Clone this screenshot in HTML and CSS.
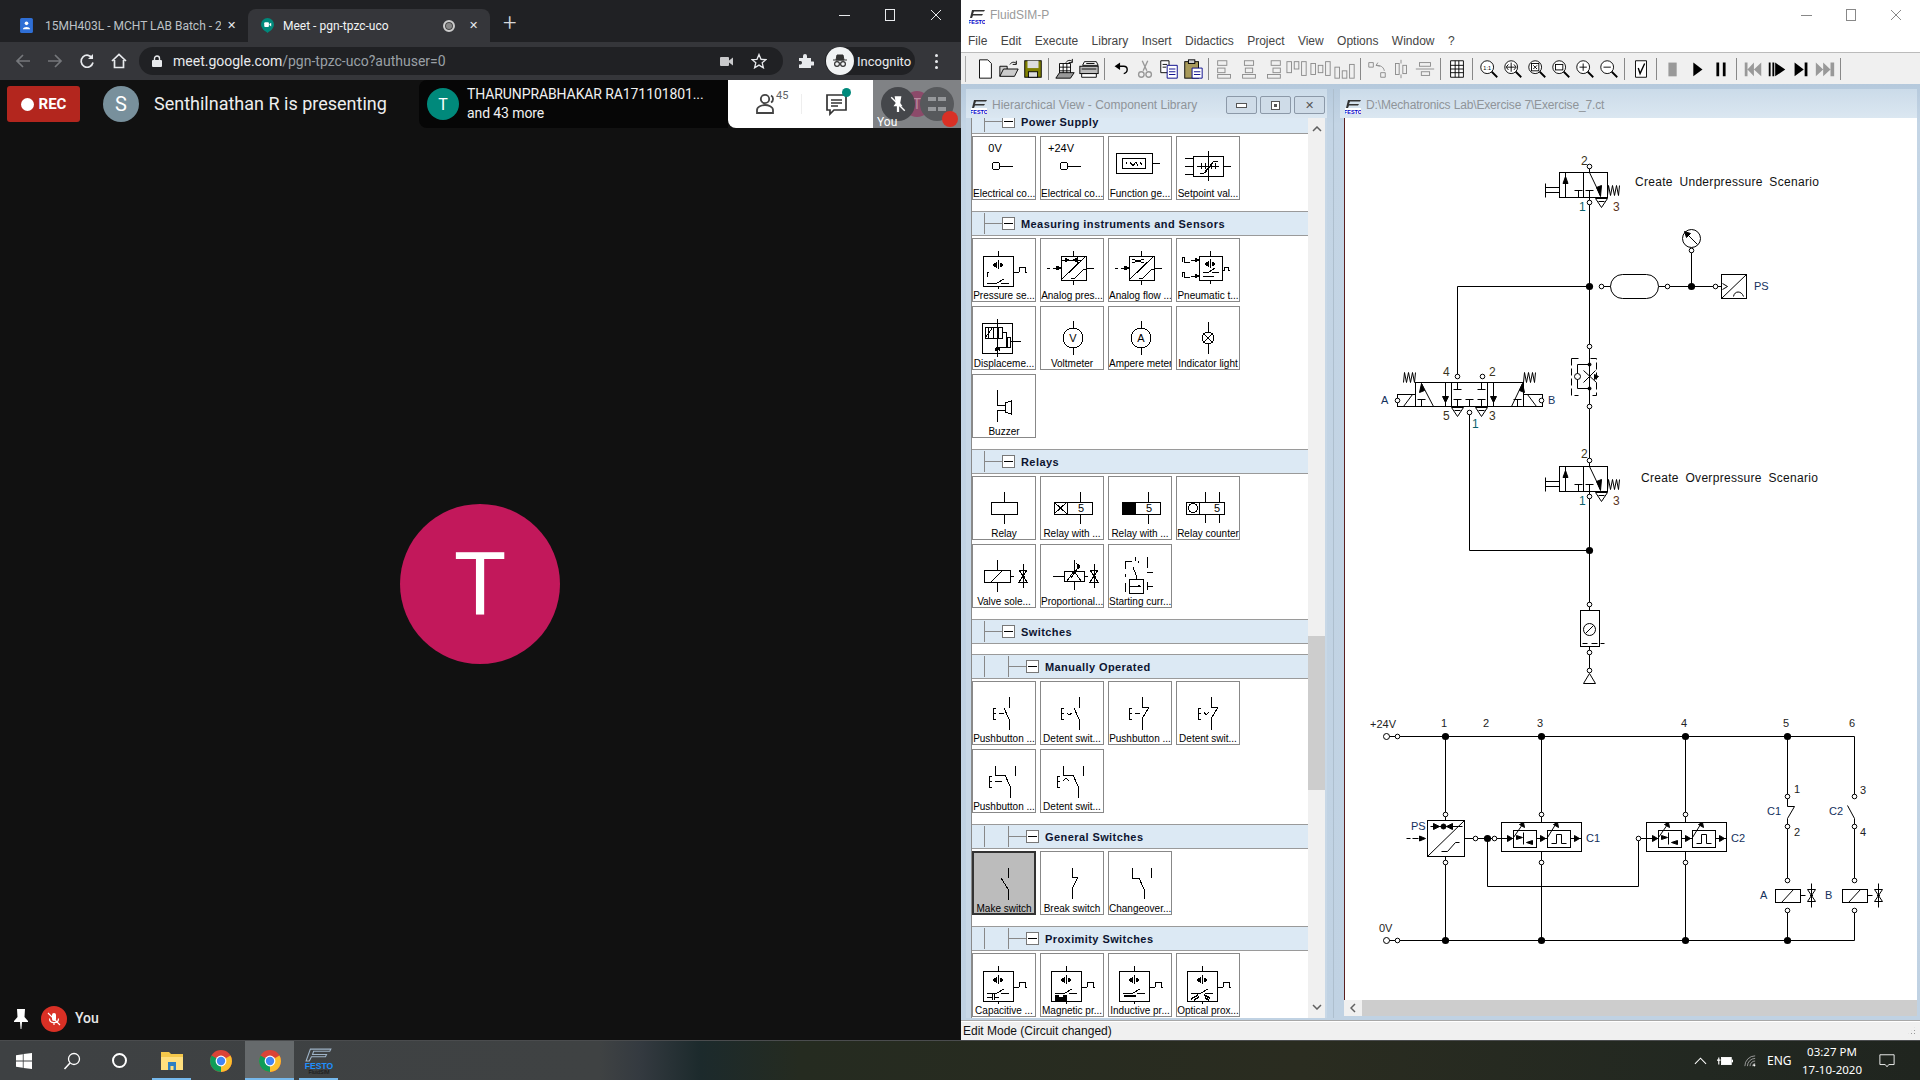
FILE: index.html
```html
<!DOCTYPE html>
<html lang="en">
<head>
    <meta charset="UTF-8">
    <title>Meet - pgn-tpzc-uco</title>
    <link rel="stylesheet" href="styles.css">
</head>
<body>

<!-- shared drawings -->
<svg class="defs">
    <defs>
        <g id="festo">
            <path d="M3 3H16L15 4.500H5L4 7H14L13 8.500H4L3 11H1Z" fill="#333"/>
            <rect x="0" y="11" width="16" height="6" fill="#fff"/>
            <text x="8" y="16.500" class="festo-text">FESTO</text>
        </g>
        <g id="chrome-logo">
            <circle cx="12" cy="12" r="11" fill="#db4437"/>
            <path d="M12 12L2.5 6.5A11 11 0 0 0 12 23Z" fill="#0f9d58"/>
            <path d="M12 12L21.5 6.5A11 11 0 0 1 12 23Z" fill="#fbc02d"/>
            <circle cx="12" cy="12" r="5.4" fill="#fff"/>
            <circle cx="12" cy="12" r="4.2" fill="#4285f4"/>
        </g>
        <!-- toolbar -->
        <g id="t-lens">
            <circle cx="10" cy="10" r="7" fill="#fff" stroke="#000"/>
            <path d="M15 15L21 21" stroke="#000" stroke-width="2"/>
        </g>
        <g id="t-al1" stroke="#8a8a8a" fill="none"><rect x="4" y="3" width="10" height="5"/><rect x="4" y="11" width="8" height="5"/><rect x="4" y="18" width="14" height="4"/></g>
        <g id="t-al2" stroke="#8a8a8a" fill="none"><rect x="7" y="3" width="10" height="5"/><rect x="8" y="11" width="8" height="5"/><rect x="5" y="18" width="14" height="4"/></g>
        <g id="t-al3" stroke="#8a8a8a" fill="none"><rect x="10" y="3" width="10" height="5"/><rect x="12" y="11" width="8" height="5"/><rect x="6" y="18" width="14" height="4"/></g>
        <g id="t-al4" stroke="#8a8a8a" fill="none"><rect x="1" y="4" width="5" height="12"/><rect x="9" y="4" width="5" height="8"/><rect x="17" y="4" width="5" height="15"/></g>
        <g id="t-al5" stroke="#8a8a8a" fill="none"><rect x="1" y="6" width="5" height="12"/><rect x="9" y="8" width="5" height="8"/><rect x="17" y="4" width="5" height="15"/></g>
        <g id="t-al6" stroke="#8a8a8a" fill="none"><rect x="1" y="10" width="5" height="12"/><rect x="9" y="14" width="5" height="8"/><rect x="17" y="7" width="5" height="15"/></g>
        <!-- components -->
        <g id="port"><circle r="2.3" fill="#fff" stroke="#000"/></g>
        <g id="junction"><circle r="3.6" fill="#000" stroke="none"/></g>
        <g id="hourglass"><path d="M0 -12V12M-4 -6H4L-4 6H4Z"/><path d="M-1.5 0H1.5"/></g>
        <g id="spring"><path d="M0 0L1 -10L3 0L5 -10L7 0L9 -10L11 0L12 -10"/></g>
        <g id="exhaust"><path d="M-6 0H6L0 9Z" fill="#fff"/><path d="M-3 3H3"/></g>
        <g id="v32">
            <rect width="48" height="25" fill="#fff"/>
            <path d="M24 0V25M6 25V0M19 25V18M15 18H23M30 25V18M26 18H34M30 0L41 23"/>
            <path d="M6 4L3.5 11H8.5Z M41 24L37 15L42 13Z" fill="#000"/>
            <path d="M-14 11V25M-14 15H0M-14 20H0"/>
            <use href="#spring" x="48" y="23"/>
            <use href="#exhaust" x="42" y="26"/>
        </g>
        <g id="cmp">
            <rect width="80" height="29" fill="#fff"/>
            <rect x="12" y="8" width="23" height="17"/>
            <rect x="46" y="8" width="23" height="17"/>
            <path d="M0 16H12M35 16H46M69 16H80"/>
            <path d="M6 13L11 16L6 19Z M39 13L44 16L39 19Z M73 13L78 16L73 19Z M15 13L21 15L15 17Z M31 18L25 20L31 22Z" fill="#000"/>
            <path d="M12 15L21 2M46 15L54 2"/>
            <path d="M18 2L22 0L23 5Z M52 2L56 0L57 5Z" fill="#000"/>
            <path d="M22 10V22M50 21H55V12H60V21H65"/>
        </g>
        <g id="coil">
            <rect width="25" height="13" fill="#fff"/>
            <path d="M6 13L18 0M25 6H30"/>
            <use href="#hourglass" x="36" y="6"/>
        </g>
        <!-- library tiles -->
        <g id="sensor-body">
            <rect x="10" y="17" width="30" height="30"/>
            <path d="M25 12V17M25 47V51M40 33H46M46 33V28H52V33H54"/>
            <path d="M25 21V30M23 24L20 26L23 28ZM27 24L30 26L27 28Z" fill="#000"/>
        </g>
        <g id="contact"><path d="M14 39H24L31 35M28 39H36"/></g>
        <g id="sw-no"><path d="M35 16V26M28 26L35 37V48"/></g>
        <g id="sw-e"><path d="M3 26H0V37H3M0 31.5H3"/></g>
    </defs>
</svg>

<div class="screen">
    <div class="windows">

        <!-- browser window -->
        <div class="chrome">
            <div class="tabstrip">
                <div class="tab">
                    <svg class="tab-icon" viewBox="0 0 12 14"><rect width="12" height="14" rx="1.5" fill="#2f6fd6"/><circle cx="6" cy="5" r="1.7" fill="#fff"/><path d="M2.6 10.5C3 7.8 9 7.8 9.4 10.5Z" fill="#fff"/></svg>
                    <span class="tab-title">15MH403L - MCHT LAB Batch - 2</span>
                    <span class="tab-x">&#10005;</span>
                </div>
                <div class="tab tab-active">
                    <svg class="tab-icon" viewBox="0 0 14 16"><path d="M7 0A7 7 0 0 1 14 7C14 11 10 14 7 16C4 14 0 11 0 7A7 7 0 0 1 7 0Z" fill="#00897b"/><rect x="3.5" y="4.5" width="5" height="5" rx="1" fill="#fff"/><path d="M9 6.5L11 5V9L9 7.5Z" fill="#fff"/></svg>
                    <span class="tab-title">Meet - pgn-tpzc-uco</span>
                    <span class="tab-rec"></span>
                    <span class="tab-x">&#10005;</span>
                </div>
                <span class="tab-new">+</span>
                <div class="win-btns">
                    <span class="min-ico"></span>
                    <span class="max-ico"></span>
                    <svg viewBox="0 0 12 12" class="x-ico"><path d="M1 1L11 11M11 1L1 11"/></svg>
                </div>
            </div>
            <div class="navbar">
                <svg class="nav-ico" viewBox="0 0 16 16"><path d="M15 8H2M8 2L2 8L8 14" class="grey"/></svg>
                <svg class="nav-ico" viewBox="0 0 16 16"><path d="M1 8H14M8 2L14 8L8 14" class="grey"/></svg>
                <svg class="nav-ico" viewBox="0 0 16 16"><path d="M13.5 5.5A6 6 0 1 0 14 9.5"/><path d="M14 1V6H9" class="solid"/></svg>
                <svg class="nav-ico" viewBox="0 0 16 16"><path d="M1 8L8 1.5L15 8M3.5 7V14.5H12.5V7"/></svg>
                <div class="omnibox">
                    <svg class="lock" viewBox="0 0 10 12"><rect y="5" width="10" height="7" rx="1" fill="#e8eaed"/><path d="M2.5 5V3.5A2.5 2.5 0 0 1 7.5 3.5V5" fill="none" stroke="#e8eaed" stroke-width="1.4"/></svg>
                    <span class="url"><b>meet.google.com</b>/pgn-tpzc-uco?authuser=0</span>
                    <svg class="omni-ico" viewBox="0 0 16 16"><rect x="1" y="4" width="9" height="9" rx="1" fill="#c8c9cb"/><path d="M10 7.5L14 4.5V12.5L10 9.5Z" fill="#c8c9cb"/></svg>
                    <svg class="omni-ico" viewBox="0 0 16 16"><path d="M8 1.5L10 6.3L15 6.6L11.2 9.8L12.4 14.8L8 12.1L3.6 14.8L4.8 9.8L1 6.6L6 6.3Z" fill="none" stroke="#e8eaed" stroke-width="1.3"/></svg>
                </div>
                <svg class="puzzle" viewBox="0 0 16 16"><path d="M1 5H5V3A2 2 0 0 1 9 3V5H13V8.5H15A2 2 0 0 1 15 12.5H13V15H1V11.5H3A2 2 0 0 0 3 8H1Z" fill="#e8eaed"/></svg>
                <div class="incog">
                    <span class="incog-ava"><svg viewBox="0 0 18 18"><path d="M2 8H16M5 8L6 3H12L13 8Z" fill="#333" stroke="#333"/><circle cx="6" cy="12" r="2.4" fill="none" stroke="#333" stroke-width="1.2"/><circle cx="12" cy="12" r="2.4" fill="none" stroke="#333" stroke-width="1.2"/></svg></span>
                    <span>Incognito</span>
                </div>
                <span class="kebab"><i></i><i></i><i></i></span>
            </div>
            <div class="meet">
                <div class="meet-top">
                    <div class="rec"><i></i>REC</div>
                    <div class="ava ava-s">S</div>
                    <div class="presenting">Senthilnathan R is presenting</div>
                    <div class="presenter-box">
                        <div class="ava ava-t">T</div>
                        <div class="who">THARUNPRABHAKAR RA171101801...<br>and 43 more</div>
                    </div>
                    <div class="meet-actions">
                        <div class="people">
                            <svg viewBox="0 0 24 24"><circle cx="10" cy="7" r="4.2"/><path d="M2 21V18C2 14.5 7 13 10 13S18 14.5 18 18V21Z"/><path d="M16 3.5A4 4 0 0 1 16 10.5"/></svg>
                            <sup>45</sup>
                        </div>
                        <span class="divider"></span>
                        <div class="chat">
                            <svg viewBox="0 0 24 24"><path d="M2 3H21V18H9L5 22V18H2Z"/><path d="M6 8H17M6 11H17M6 14H13"/></svg>
                            <i></i>
                        </div>
                    </div>
                    <div class="thumb">
                        <span class="thumb-c c2">T</span>
                        <span class="thumb-c c1"><svg viewBox="0 0 16 16"><path d="M5 1H11L10 7L12 10H9V15H7V10H4L6 7Z" fill="#fff"/><path d="M2 2L14 14" stroke="#fff" stroke-width="1.3"/></svg></span>
                        <span class="thumb-c c3"><i></i><i></i><i></i><i></i></span>
                        <span class="thumb-you">You</span>
                        <span class="thumb-mic"></span>
                    </div>
                </div>
                <div class="meet-stage">
                    <div class="big-t">T</div>
                </div>
                <div class="meet-bottom">
                    <svg class="pin" viewBox="0 0 14 20"><path d="M3 0H11L10.5 8L14 12V13H8L7.4 20H6.6L6 13H0V12L3.5 8Z" fill="#fff"/></svg>
                    <span class="mic"><svg viewBox="0 0 16 16"><rect x="6" y="2" width="4" height="8" rx="2" fill="#fff"/><path d="M3.5 7.5C3.5 13 12.5 13 12.5 7.5M8 12V14M2 2L14 14" fill="none" stroke="#fff" stroke-width="1.2"/></svg></span>
                    <span class="you">You</span>
                </div>
            </div>
        </div>

        <!-- FluidSIM window -->
        <div class="fluid">
            <div class="fs-title">
                <svg class="fs-logo" viewBox="0 0 16 17"><use href="#festo"/></svg>
                <span>FluidSIM-P</span>
                <div class="fs-btns">
                    <span class="min-ico"></span>
                    <span class="max-ico"></span>
                    <svg viewBox="0 0 12 12" class="x-ico"><path d="M1 1L11 11M11 1L1 11"/></svg>
                </div>
            </div>
            <div class="fs-menu">
                <span>File</span><span>Edit</span><span>Execute</span><span>Library</span><span>Insert</span><span>Didactics</span><span>Project</span><span>View</span><span>Options</span><span>Window</span><span>?</span>
            </div>
            <div class="fs-tools">
                <svg class="ti" viewBox="0 0 24 24"><path d="M6 2H15L19 6V22H6Z" fill="#fff" stroke="#000"/></svg>
                <svg class="ti" viewBox="0 0 24 24"><path d="M2 20L6 12H22L18 20ZM2 20V9H10V12" fill="#ccc" stroke="#000"/><path d="M13 7C15 4 18 4 20 6M20 3V7H16" fill="none" stroke="#000"/></svg>
                <svg class="ti" viewBox="0 0 24 24"><rect x="3" y="3" width="18" height="18" fill="#808000" stroke="#000"/><rect x="6" y="3" width="12" height="8" fill="#ddd"/><rect x="7" y="15" width="10" height="6" fill="#ddd" stroke="#000"/></svg>
                <i class="tsep"></i>
                <svg class="ti" viewBox="0 0 24 24"><path d="M6 6H18V18H6ZM6 10H18M6 14H18M10 6V18M14 6V18" fill="#fff" stroke="#000"/><path d="M2 22L6 16H22L18 22Z" fill="#999" stroke="#000"/><path d="M13 5C15 2 18 2 20 4M20 1V5H16" fill="none" stroke="#000"/></svg>
                <svg class="ti" viewBox="0 0 24 24"><path d="M7 4H20L22 8H5Z" fill="#fff" stroke="#000"/><rect x="2" y="9" width="20" height="8" fill="#bbb" stroke="#000"/><path d="M4 17H20V21H4Z" fill="#fff" stroke="#000"/><path d="M9 6H18M4 12H20" stroke="#000"/></svg>
                <i class="tsep"></i>
                <svg class="ti" viewBox="0 0 24 24"><path d="M10 9H15C20 9 20 16 15 17" fill="none" stroke="#000" stroke-width="1.5"/><path d="M5 9L11 5V13Z" fill="#000"/></svg>
                <svg class="ti" viewBox="0 0 24 24"><path d="M9 3L14 14M15 3L10 14" fill="none" stroke="#999" stroke-width="1.5"/><circle cx="8" cy="18" r="3" fill="none" stroke="#999" stroke-width="1.5"/><circle cx="16" cy="18" r="3" fill="none" stroke="#999" stroke-width="1.5"/></svg>
                <svg class="ti" viewBox="0 0 24 24"><path d="M3 3H12V16H3Z" fill="#fff" stroke="#000"/><path d="M10 8H21V22H10Z" fill="#fff" stroke="#008"/><path d="M12 12H19M12 15H19M12 18H19" stroke="#008"/><path d="M5 7H10M5 10H9" stroke="#000"/></svg>
                <svg class="ti" viewBox="0 0 24 24"><rect x="3" y="4" width="15" height="18" fill="#a89a5a" stroke="#000"/><rect x="7" y="2" width="7" height="4" fill="#ccc" stroke="#000"/><path d="M11 11H22V22H11Z" fill="#fff" stroke="#008"/><path d="M13 15H20M13 18H20" stroke="#008"/></svg>
                <i class="tsep"></i>
                <svg class="ti" viewBox="0 0 24 24"><use href="#t-al1"/></svg>
                <svg class="ti" viewBox="0 0 24 24"><use href="#t-al2"/></svg>
                <svg class="ti" viewBox="0 0 24 24"><use href="#t-al3"/></svg>
                <svg class="ti" viewBox="0 0 24 24"><use href="#t-al4"/></svg>
                <svg class="ti" viewBox="0 0 24 24"><use href="#t-al5"/></svg>
                <svg class="ti" viewBox="0 0 24 24"><use href="#t-al6"/></svg>
                <i class="tsep"></i>
                <svg class="ti" viewBox="0 0 24 24"><path d="M3 5H8V10H3ZM16 16H21V21H16ZM13 5L11 8L15 9M11 8C15 8 19 9 20 14" fill="none" stroke="#8a8a8a"/></svg>
                <svg class="ti" viewBox="0 0 24 24"><path d="M12 2V6M12 18V22" stroke="#8a8a8a"/><rect x="6" y="6" width="4" height="12" fill="none" stroke="#8a8a8a"/><rect x="14" y="8" width="4" height="9" fill="none" stroke="#8a8a8a"/></svg>
                <svg class="ti" viewBox="0 0 24 24"><path d="M2 12H22" stroke="#8a8a8a"/><rect x="6" y="5" width="12" height="4" fill="none" stroke="#8a8a8a"/><rect x="8" y="15" width="9" height="4" fill="none" stroke="#8a8a8a"/></svg>
                <i class="tsep"></i>
                <svg class="ti" viewBox="0 0 24 24"><path d="M5 3H19V21H5ZM5 8H19M5 12H19M5 16H19M10 3V21M14 3V21" fill="#fff" stroke="#000"/></svg>
                <i class="tsep"></i>
                <svg class="ti" viewBox="0 0 24 24"><use href="#t-lens"/><text x="10" y="13" class="lens-t">1:1</text></svg>
                <svg class="ti" viewBox="0 0 24 24"><use href="#t-lens"/><path d="M5 10H15M7 7L4.5 10L7 13M13 7L15.5 10L13 13M10 5V15" fill="none" stroke="#000"/></svg>
                <svg class="ti" viewBox="0 0 24 24"><use href="#t-lens"/><rect x="6" y="6" width="8" height="8" fill="none" stroke="#000"/><path d="M8 8L12 12M12 8L8 12" stroke="#000"/></svg>
                <svg class="ti" viewBox="0 0 24 24"><use href="#t-lens"/><rect x="6" y="7" width="8" height="6" fill="none" stroke="#000"/></svg>
                <svg class="ti" viewBox="0 0 24 24"><use href="#t-lens"/><path d="M6 10H14M10 6V14" stroke="#000"/></svg>
                <svg class="ti" viewBox="0 0 24 24"><use href="#t-lens"/><path d="M6 10H14" stroke="#000"/></svg>
                <i class="tsep"></i>
                <svg class="ti" viewBox="0 0 24 24"><path d="M6 3H18V21H6Z" fill="#fff" stroke="#000"/><path d="M9 11L11 17L16 6" fill="none" stroke="#000" stroke-width="1.5"/></svg>
                <i class="tsep"></i>
                <svg class="ti" viewBox="0 0 24 24"><rect x="7" y="5" width="9" height="15" fill="#999"/></svg>
                <svg class="ti" viewBox="0 0 24 24"><path d="M8 5L18 12.500L8 20Z" fill="#000"/></svg>
                <svg class="ti" viewBox="0 0 24 24"><path d="M7 5H10V20H7ZM14 5H17V20H14Z" fill="#000"/></svg>
                <i class="tsep"></i>
                <svg class="ti" viewBox="0 0 24 24"><path d="M3 5H6V20H3ZM13 5V20L6 12.500ZM21 5V20L13 12.500Z" fill="#999"/></svg>
                <svg class="ti" viewBox="0 0 24 24"><path d="M3 5H5V20H3ZM7 5H9V20H7ZM10 5L21 12.500L10 20Z" fill="#000"/></svg>
                <svg class="ti" viewBox="0 0 24 24"><path d="M5 5L15 12.500L5 20ZM16 5H19V20H16Z" fill="#000"/></svg>
                <svg class="ti" viewBox="0 0 24 24"><path d="M2 5L10 12.500L2 20ZM10 5L18 12.500L10 20ZM18 5H22V20H18Z" fill="#999"/></svg>
                <i class="tsep"></i>
            </div>

            <div class="mdi">
                <div class="lib-win">
                    <div class="mdi-title">
                        <svg class="fs-logo" viewBox="0 0 16 17"><use href="#festo"/></svg>
                        <span>Hierarchical View - Component Library</span>
                        <div class="mdi-btns">
                            <span class="mdi-btn"><i class="b-min"></i></span>
                            <span class="mdi-btn"><i class="b-res"></i></span>
                            <span class="mdi-btn mdi-x">&#10005;</span>
                        </div>
                    </div>
                    <div class="lib-body">
                        <div class="lib-list">

                            <div class="head head-first"><i class="tv"></i><i class="th"></i><i class="tbox"></i><b>Power Supply</b></div>
                            <div class="tiles">
                                <div class="tile"><svg viewBox="0 0 62 50"><text x="22" y="15" class="ic-t">0V</text><circle cx="23" cy="29" r="4"/><path d="M27 29H40"/></svg><span>Electrical co...</span></div>
                                <div class="tile"><svg viewBox="0 0 62 50"><text x="20" y="15" class="ic-t">+24V</text><circle cx="23" cy="29" r="4"/><path d="M27 29H40"/></svg><span>Electrical co...</span></div>
                                <div class="tile"><svg viewBox="0 0 62 50"><rect x="7" y="16" width="36" height="20"/><rect x="13" y="21" width="23" height="10"/><path d="M43 26H51M17 25V27M21 25L24 29L27 25L29 29M31 25L33 28"/></svg><span>Function ge...</span></div>
                                <div class="tile"><svg viewBox="0 0 62 50"><rect x="16" y="19" width="30" height="20"/><path d="M31 14V44M46 29H54M8 21H16M8 29H16M8 37H16M20 29H42M24 26V32M28 26V32M34 26V32M38 26V32M23 36H27L37 24H41M28 36L34 28"/></svg><span>Setpoint val...</span></div>

                            </div>

                            <div class="head"><i class="tv"></i><i class="th"></i><i class="tbox"></i><b>Measuring instruments and Sensors</b></div>
                            <div class="tiles">
                                <div class="tile"><svg viewBox="0 0 62 50"><use href="#sensor-body"/><path d="M14 33V38M14 33H16M14 44H24L31 40M28 44H36"/></svg><span>Pressure se...</span></div>
                                <div class="tile"><svg viewBox="0 0 62 50"><rect x="20" y="17" width="25" height="24"/><path d="M32 12V17M32 41V46M45 29H53M6 29H9M12 29H20M20 41L45 17M20 21H40M30 39H34L43 30H45"/><path d="M15 27L20 29L15 31ZM24 19L28 21L24 23ZM36 19L32 21L36 23Z" fill="#000"/></svg><span>Analog pres...</span></div>
                                <div class="tile"><svg viewBox="0 0 62 50"><rect x="20" y="17" width="25" height="24"/><path d="M32 12V17M32 41V46M45 29H53M6 29H9M12 29H20M20 41L45 17M23 20C27 22 31 22 35 20M23 24C27 22 31 22 35 24M30 39H34L43 30H45"/><path d="M15 27L20 29L15 31Z" fill="#000"/></svg><span>Analog flow ...</span></div>
                                <div class="tile"><svg viewBox="0 0 62 50"><rect x="22" y="17" width="23" height="24"/><path d="M33 12V17M33 41V45M45 31H47V28H51V31H53M5 23V18H7V23H13M5 38V33H7V38H13M14 21H22M14 37H22M26 33H32L38 29M35 33H42M26 37H37" /><path d="M18 19L22 21L18 23ZM18 35L22 37L18 39ZM33 20V29M31 23L28 25L31 27ZM35 23L38 25L35 27Z" fill="#000"/></svg><span>Pneumatic t...</span></div>
                                <div class="tile"><svg viewBox="0 0 62 50"><rect x="9" y="16" width="30" height="30"/><rect x="12" y="20" width="17" height="11"/><path d="M12 31L20 20M15 20V31M20 20V31M25 20V31M24 12V50M29 25H33V30M34 30V40M33 40H26V44M37 36V30H33V40H37V36M37 34H48"/><circle cx="24" cy="42" r="1.5" fill="#000"/></svg><span>Displaceme...</span></div>
                                <div class="tile"><svg viewBox="0 0 62 50"><circle cx="32" cy="31" r="10"/><path d="M32 14V21M32 41V48"/><text x="32" y="35" class="ic-c">V</text></svg><span>Voltmeter</span></div>
                                <div class="tile"><svg viewBox="0 0 62 50"><circle cx="32" cy="31" r="10"/><path d="M32 14V21M32 41V48"/><text x="32" y="35" class="ic-c">A</text></svg><span>Ampere meter</span></div>
                                <div class="tile"><svg viewBox="0 0 62 50"><circle cx="31" cy="31" r="6"/><path d="M31 15V25M31 37V47M27 27L35 35M35 27L27 35"/></svg><span>Indicator light</span></div>
                                <div class="tile"><svg viewBox="0 0 62 50"><path d="M24 15V30H32M24 47V35H32M32 28V37M32 28L38 26V39L32 37"/></svg><span>Buzzer</span></div>
                            </div>

                            <div class="head"><i class="tv"></i><i class="th"></i><i class="tbox"></i><b>Relays</b></div>
                            <div class="tiles">
                                <div class="tile"><svg viewBox="0 0 62 50"><rect x="18" y="25" width="26" height="12"/><path d="M31 15V25M31 37V47"/></svg><span>Relay</span></div>
                                <div class="tile"><svg viewBox="0 0 62 50"><rect x="13" y="25" width="38" height="12"/><path d="M26 25V37M13 25L26 37M26 25L13 37M39 15V25M39 37V47"/><text x="40" y="35" class="ic-c">5</text></svg><span>Relay with ...</span></div>
                                <div class="tile"><svg viewBox="0 0 62 50"><rect x="13" y="25" width="38" height="12"/><rect x="13" y="25" width="13" height="12" fill="#000"/><path d="M39 15V25M39 37V47"/><text x="40" y="35" class="ic-c">5</text></svg><span>Relay with ...</span></div>
                                <div class="tile"><svg viewBox="0 0 62 50"><rect x="9" y="25" width="38" height="12"/><path d="M22 25V37M28 15V25M28 37V46M42 15V25M42 37V46"/><circle cx="16" cy="31" r="4.5"/><text x="40" y="35" class="ic-c">5</text></svg><span>Relay counter</span></div>
                                <div class="tile"><svg viewBox="0 0 62 50"><rect x="11" y="25" width="26" height="12"/><path d="M18 37L30 25M24 15V25M24 37V47M38 31H41"/><use href="#hourglass" x="50" y="31"/></svg><span>Valve sole...</span></div>
                                <div class="tile"><svg viewBox="0 0 62 50"><rect x="23" y="26" width="20" height="10"/><path d="M12 31H23M33 15V26M33 36V45M44 31H47M26 36L33 26L40 36M30 33L38 21"/><path d="M36 19L39 21L37 24Z" fill="#000"/><use href="#hourglass" x="53" y="31"/></svg><span>Proportional...</span></div>
                                <div class="tile"><svg viewBox="0 0 62 50"><path d="M16 24V16H23M26 12V16M29 16V18M38 12V23M16 29V32M16 38V47M38 27H44M38 37V45M38 41H44M16 50H17M26 50H27M38 50H39"/><path d="M24 22L27 30V34"/><rect x="20" y="34" width="14" height="14"/><path d="M20 41H32"/><circle cx="30" cy="41" r="1" fill="#000"/></svg><span>Starting curr...</span></div>
                            </div>

                            <div class="head head-empty"><i class="tv"></i><i class="th"></i><i class="tbox"></i><b>Switches</b></div>

                            <div class="head"><i class="tv"></i><i class="tv tv2"></i><i class="th"></i><i class="tbox"></i><b>Manually Operated</b></div>
                            <div class="tiles">
                                <div class="tile"><svg viewBox="0 0 62 50"><use href="#sw-e" x="20"/><path d="M26 31H31M36 15V26M31 26L36 37V48"/></svg><span>Pushbutton ...</span></div>
                                <div class="tile"><svg viewBox="0 0 62 50"><use href="#sw-e" x="20"/><path d="M26 31L28 33L31 31M38 15V26M33 26L38 37V48"/></svg><span>Detent swit...</span></div>
                                <div class="tile"><svg viewBox="0 0 62 50"><use href="#sw-e" x="20"/><path d="M26 31H31M33 15V25H40L33 37V48"/></svg><span>Pushbutton ...</span></div>
                                <div class="tile"><svg viewBox="0 0 62 50"><use href="#sw-e" x="21"/><path d="M27 30L29 33L32 30M34 15V25H41L34 37V48"/></svg><span>Detent swit...</span></div>
                                <div class="tile"><svg viewBox="0 0 62 50"><use href="#sw-e" x="16"/><path d="M22 31H29M22 16V25H32L37 36V48M42 16V26"/></svg><span>Pushbutton ...</span></div>
                                <div class="tile"><svg viewBox="0 0 62 50"><use href="#sw-e" x="16"/><path d="M22 31L25 28L28 31M22 16V25H32L37 36V48M42 16V26"/></svg><span>Detent swit...</span></div>
                            </div>

                            <div class="head"><i class="tv"></i><i class="tv tv2"></i><i class="th"></i><i class="tbox"></i><b>General Switches</b></div>
                            <div class="tiles">
                                <div class="tile tile-sel"><svg viewBox="0 0 62 50"><use href="#sw-no"/></svg><span>Make switch</span></div>
                                <div class="tile"><svg viewBox="0 0 62 50"><path d="M31 16V25H37L31 37V47"/></svg><span>Break switch</span></div>
                                <div class="tile"><svg viewBox="0 0 62 50"><path d="M23 16V26H30L35 37V47M42 16V26"/></svg><span>Changeover...</span></div>
                            </div>

                            <div class="head"><i class="tv"></i><i class="tv tv2"></i><i class="th"></i><i class="tbox"></i><b>Proximity Switches</b></div>
                            <div class="tiles">
                                <div class="tile"><svg viewBox="0 0 62 50"><use href="#sensor-body"/><use href="#contact"/><path d="M14 43H19M21 43H26M19 40V46M21 40V46M23 43H26"/></svg><span>Capacitive ...</span></div>
                                <div class="tile"><svg viewBox="0 0 62 50"><use href="#sensor-body"/><use href="#contact"/><path d="M14 41V46H25V41H22V43H17V41Z" fill="#000"/></svg><span>Magnetic pr...</span></div>
                                <div class="tile"><svg viewBox="0 0 62 50"><use href="#sensor-body"/><use href="#contact"/><path d="M15 42H27" stroke-width="2"/></svg><span>Inductive pr...</span></div>
                                <div class="tile"><svg viewBox="0 0 62 50"><use href="#sensor-body"/><use href="#contact"/><path d="M14 45L21 41M17 46L22 43M27 41L33 44M28 44L32 46" stroke-width="1.5"/></svg><span>Optical prox...</span></div>
                            </div>

                        </div>
                        <div class="vscroll">
                            <svg class="arrow" viewBox="0 0 10 6"><path d="M1 5L5 1L9 5"/></svg>
                            <div class="vthumb"></div>
                            <svg class="arrow arrow-down" viewBox="0 0 10 6"><path d="M1 1L5 5L9 1"/></svg>
                        </div>
                    </div>
                </div>

                <div class="splitter"></div>

                <div class="cir-win">
                    <div class="mdi-title">
                        <svg class="fs-logo" viewBox="0 0 16 17"><use href="#festo"/></svg>
                        <span>D:\Mechatronics Lab\Exercise 7\Exercise_7.ct</span>
                    </div>
                    <div class="cir-pane">
                        <svg class="circuit" viewBox="1345 118 573 882">
                            <g transform="translate(.5 .5)">
                                <!-- pneumatic lines -->
                                <path d="M1589 166V670M1457 286H1589M1457 286V376M1469 412V550H1589M1601 286H1611M1658 286H1721M1691 250V286"/>

                                <use href="#v32" x="1559" y="172"/>
                                <use href="#v32" x="1559" y="466"/>
                                <use href="#port" x="1589" y="166"/><use href="#port" x="1589" y="202"/>
                                <use href="#port" x="1589" y="460"/><use href="#port" x="1589" y="496"/>

                                <use href="#junction" x="1589" y="286"/>
                                <use href="#junction" x="1691" y="286"/>
                                <use href="#junction" x="1589" y="550"/>
                                <use href="#port" x="1601" y="286"/>
                                <rect x="1610" y="274" width="48" height="24" rx="12" fill="#fff"/>
                                <use href="#port" x="1667" y="286"/>
                                <use href="#port" x="1715" y="286"/>
                                <circle cx="1691" cy="238" r="9" fill="#fff"/>
                                <path d="M1685 232L1697 244"/>
                                <path d="M1684 231L1690 233L1686 237Z" fill="#000"/>
                                <use href="#port" x="1691" y="250"/>
                                <rect x="1721" y="274" width="25" height="24" fill="#fff"/>
                                <path d="M1721 298L1746 274M1722 283L1727 286L1722 289M1733 296C1734 290 1741 290 1743 296"/>

                                <!-- one way flow control -->
                                <use href="#port" x="1589" y="346"/>
                                <use href="#port" x="1589" y="406"/>
                                <path d="M1571 358V395H1578M1590 358H1596V395H1590M1571 358H1578" stroke-dasharray="7 3"/>
                                <path d="M1577 364V388M1577 364H1589M1577 388H1589M1583 370L1596 382M1595 370L1583 382"/>
                                <circle cx="1577" cy="376" r="3" fill="#fff"/>
                                <circle cx="1589" cy="364" r="1.5" fill="#000"/>
                                <circle cx="1589" cy="388" r="1.5" fill="#000"/>
                                <path d="M1594 374L1598 376L1594 379Z" fill="#000"/>

                                <!-- 5/2 valve -->
                                <rect x="1397" y="394" width="18" height="12" fill="#fff"/>
                                <path d="M1403 406L1412 394"/>
                                <rect x="1415" y="382" width="108" height="24" fill="#fff"/>
                                <rect x="1523" y="394" width="19" height="12" fill="#fff"/>
                                <path d="M1527 394L1536 406"/>
                                <path d="M1421 383L1433 406M1445 382V406M1451 382V406M1487 382V406M1493 382V406M1511 406L1522 383M1421 406V399M1417 399H1425M1517 406V399M1513 399H1521M1457 382V389M1453 389H1461M1481 382V389M1477 389H1485M1457 406V399M1453 399H1461M1469 406V399M1465 399H1473M1481 406V399M1477 399H1485"/>
                                <path d="M1421 383L1424 390L1419 392ZM1522 383L1519 390L1524 392ZM1445 402L1442 396H1448ZM1493 402L1490 396H1496Z" fill="#000"/>
                                <use href="#spring" x="1403" y="382"/>
                                <use href="#spring" x="1523" y="382"/>
                                <use href="#port" x="1457" y="376"/>
                                <use href="#port" x="1482" y="376"/>
                                <use href="#port" x="1397" y="400"/>
                                <use href="#port" x="1541" y="400"/>
                                <use href="#exhaust" x="1457" y="407"/>
                                <use href="#exhaust" x="1481" y="407"/>
                                <use href="#port" x="1469" y="412"/>

                                <!-- service unit -->
                                <use href="#port" x="1589" y="604"/>
                                <rect x="1580" y="610" width="19" height="36" fill="#fff"/>
                                <circle cx="1589" cy="629" r="6"/>
                                <path d="M1585 633L1593 625M1582 643H1587M1591 643H1597M1600 643H1604"/>
                                <use href="#port" x="1589" y="652"/>
                                <use href="#port" x="1589" y="670"/>
                                <path d="M1589 673L1595 683H1583Z" fill="#fff"/>

                                <!-- electrical lines -->
                                <path d="M1386 736H1854V796M1386 940H1854V910M1445 736V940M1541 736V940M1685 736V940M1787 736V805M1787 818V880M1787 910V940M1854 818V880"/>
                                <circle cx="1386" cy="736" r="3" fill="#fff"/>
                                <circle cx="1386" cy="940" r="3" fill="#fff"/>
                                <use href="#port" x="1397" y="736"/>
                                <use href="#port" x="1397" y="940"/>
                                <use href="#junction" x="1445" y="736"/><use href="#junction" x="1541" y="736"/><use href="#junction" x="1685" y="736"/><use href="#junction" x="1787" y="736"/>
                                <use href="#junction" x="1445" y="940"/><use href="#junction" x="1541" y="940"/><use href="#junction" x="1685" y="940"/><use href="#junction" x="1787" y="940"/>

                                <!-- pressure sensor -->
                                <rect x="1427" y="820" width="37" height="36" fill="#fff"/>
                                <path d="M1427 856L1464 820M1441 851H1447L1455 842H1459M1430 826H1462"/>
                                <path d="M1433 823L1439 826L1433 829ZM1452 823L1446 826L1452 829Z" fill="#000"/>
                                <circle cx="1443" cy="826" r="2.5" fill="#000"/>
                                <path d="M1406 838H1410M1412 838H1418"/>
                                <path d="M1419 835.500L1425 838L1419 840.500Z" fill="#000"/>
                                <path d="M1464 838H1501M1487 838V886H1638V838"/>
                                <use href="#port" x="1445" y="814"/><use href="#port" x="1445" y="862"/>
                                <use href="#port" x="1475" y="838"/>
                                <use href="#port" x="1494" y="838"/>
                                <use href="#junction" x="1487" y="838"/>

                                <!-- comparators -->
                                <use href="#cmp" x="1501" y="822"/>
                                <use href="#cmp" x="1646" y="822"/>
                                <path d="M1638 838H1646"/>
                                <use href="#port" x="1541" y="814"/><use href="#port" x="1541" y="862"/>
                                <use href="#port" x="1685" y="814"/><use href="#port" x="1685" y="862"/>
                                <use href="#port" x="1638" y="838"/>

                                <!-- contacts and coils -->
                                <use href="#port" x="1787" y="796"/><use href="#port" x="1787" y="826"/>
                                <path d="M1787 800V806H1794L1787 818"/>
                                <use href="#port" x="1854" y="796"/><use href="#port" x="1854" y="826"/>
                                <path d="M1847 805L1854 818"/>
                                <use href="#coil" x="1775" y="889"/>
                                <use href="#coil" x="1842" y="889"/>
                                <use href="#port" x="1787" y="880"/><use href="#port" x="1787" y="910"/>
                                <use href="#port" x="1854" y="880"/><use href="#port" x="1854" y="910"/>
                            </g>

                            <text x="1635" y="186" class="note">Create Underpressure Scenario</text>
                            <text x="1641" y="482" class="note">Create Overpressure Scenario</text>
                            <text x="1581" y="165" class="lb lb-o">2</text><text x="1579" y="211" class="lb lb-g">1</text><text x="1613" y="211" class="lb lb-r">3</text>
                            <text x="1581" y="458" class="lb lb-o">2</text><text x="1579" y="505" class="lb lb-g">1</text><text x="1613" y="505" class="lb lb-r">3</text>
                            <text x="1754" y="290" class="lb lb-b">PS</text>
                            <text x="1443" y="376" class="lb lb-o">4</text><text x="1489" y="376" class="lb lb-o">2</text>
                            <text x="1381" y="404" class="lb lb-b">A</text><text x="1548" y="404" class="lb lb-b">B</text>
                            <text x="1443" y="420" class="lb lb-o">5</text><text x="1489" y="420" class="lb lb-o">3</text><text x="1472" y="428" class="lb lb-g">1</text>
                            <text x="1370" y="728" class="lb">+24V</text>
                            <text x="1379" y="932" class="lb">0V</text>
                            <text x="1441" y="727" class="lb">1</text><text x="1483" y="727" class="lb">2</text><text x="1537" y="727" class="lb">3</text><text x="1681" y="727" class="lb">4</text><text x="1783" y="727" class="lb">5</text><text x="1849" y="727" class="lb">6</text>
                            <text x="1411" y="830" class="lb lb-b">PS</text>
                            <text x="1586" y="842" class="lb lb-b">C1</text><text x="1731" y="842" class="lb lb-b">C2</text>
                            <text x="1794" y="793" class="lb">1</text><text x="1794" y="836" class="lb">2</text>
                            <text x="1860" y="794" class="lb">3</text><text x="1860" y="836" class="lb">4</text>
                            <text x="1767" y="815" class="lb lb-b">C1</text><text x="1829" y="815" class="lb lb-b">C2</text>
                            <text x="1760" y="899" class="lb lb-b">A</text><text x="1825" y="899" class="lb lb-b">B</text>
                        </svg>
                    </div>
                    <div class="hscroll">
                        <svg class="arrow" viewBox="0 0 6 10"><path d="M5 1L1 5L5 9"/></svg>
                        <div class="hthumb"></div>
                    </div>
                </div>
            </div>

            <div class="fs-status">
                <span>Edit Mode (Circuit changed)</span>
                <i class="grip"></i>
            </div>
        </div>
    </div>

    <!-- taskbar -->
    <div class="taskbar">
        <svg class="tb-win" viewBox="0 0 16 16"><path d="M0 2.200L6.800 1.200V7.600H0ZM7.600 1.100L16 0V7.600H7.600ZM0 8.400H6.800V14.800L0 13.800ZM7.600 8.400H16V16L7.600 14.900Z" fill="#fff"/></svg>
        <svg class="tb-search" viewBox="0 0 18 18"><circle cx="11" cy="7" r="5.500" fill="none" stroke="#fff" stroke-width="1.300"/><path d="M7 11L1.500 17" stroke="#fff" stroke-width="1.500"/></svg>
        <span class="tb-cortana"></span>
        <span class="tb-app tb-open"><svg viewBox="0 0 24 20"><path d="M1 1H9L11 3H23V19H1Z" fill="#f5c84b"/><path d="M1 6H23V19H1Z" fill="#ffdf7e"/><rect x="8" y="11" width="8" height="8" fill="#2d7fc1"/><rect x="10.500" y="15" width="3" height="4" fill="#ffdf7e"/></svg></span>
        <span class="tb-app"><svg viewBox="0 0 24 24"><use href="#chrome-logo"/></svg></span>
        <span class="tb-app tb-open tb-active"><svg viewBox="0 0 24 24"><use href="#chrome-logo"/></svg></span>
        <span class="tb-app tb-open"><svg class="tb-festo" viewBox="0 0 26 24"><path d="M5 1H24L23 3H8L7 6H20L19 8H6L4 12H1Z" fill="none" stroke="#9fb4c8"/><text x="13" y="19" class="festo-big">FESTO</text><text x="13" y="24" class="festo-small">FluidSIM</text></svg></span>
        <div class="tray">
            <svg class="tray-up" viewBox="0 0 14 8"><path d="M1 7L7 1L13 7"/></svg>
            <svg class="tray-bat" viewBox="0 0 18 10"><rect x="5" y="1" width="11" height="8" fill="#fff" stroke="#fff"/><rect x="16.500" y="3.500" width="1.500" height="3" fill="#fff"/><path d="M2 1V9M0 4H4" stroke="#fff" stroke-width="1.300"/></svg>
            <svg class="tray-wifi" viewBox="0 0 14 14"><path d="M1 13A12 12 0 0 1 13 1M4 13A9 9 0 0 1 13 4M7 13A6 6 0 0 1 13 7M10 13A3 3 0 0 1 13 10" fill="none" stroke="#aaa"/><circle cx="12" cy="12" r="1.300" fill="#fff"/></svg>
            <span class="tray-lang">ENG</span>
            <div class="tray-clock"><span>03:27 PM</span><span>17-10-2020</span></div>
            <svg class="tray-note" viewBox="0 0 18 16"><path d="M1 1H17V12H11L9 14.500L7 12H1Z"/></svg>
        </div>
    </div>
</div>

</body>
</html>
```

FILE: styles.css
```css
* {
    box-sizing: border-box;
}

html, body {
    margin: 0;
    width: 1920px;
    height: 1080px;
    overflow: hidden;
    background: #111;
}

body {
    font-family: "Liberation Sans", Arial, sans-serif;
}

.defs {
    display: none;
}

.festo-text {
    font: bold 5.5px "Liberation Sans", sans-serif;
    fill: #0000c8;
    text-anchor: middle;
}

.screen {
    display: flex;
    flex-direction: column;
    width: 1920px;
    height: 1080px;
}

.windows {
    display: flex;
    height: 1040px;
}

/* ---------- browser ---------- */

.chrome {
    width: 961px;
    display: flex;
    flex-direction: column;
    color: #e8eaed;
    font-family: Roboto, "Liberation Sans", sans-serif;
}

.tabstrip {
    height: 42px;
    background: #202124;
    display: flex;
    align-items: flex-end;
    flex: none;
}

.tab {
    width: 248px;
    height: 33px;
    display: flex;
    align-items: center;
    padding-left: 20px;
    font-size: 12px;
    color: #bdc1c6;
}

.tab-icon {
    width: 13px;
    height: 15px;
    flex: none;
}

.tab-title {
    margin-left: 12px;
    width: 176px;
    white-space: nowrap;
    overflow: hidden;
}

.tab-x {
    font-size: 11px;
    color: #e8eaed;
    margin-left: 6px;
}

.tab-active {
    width: 242px;
    background: #35363a;
    border-radius: 8px 8px 0 0;
    padding-left: 13px;
    color: #f1f3f4;
}

.tab-active .tab-title {
    margin-left: 9px;
    width: 160px;
}

.tab-active .tab-x {
    margin-left: 14px;
}

.tab-rec {
    width: 12px;
    height: 12px;
    border-radius: 50%;
    background: #888;
    border: 2px solid #ccc;
    box-shadow: inset 0 0 0 1px #444;
}

.tab-new {
    font-size: 24px;
    font-weight: 300;
    margin-left: 13px;
    height: 33px;
    line-height: 28px;
    color: #d5d7da;
}

.win-btns {
    display: flex;
    align-items: center;
    margin-left: auto;
    height: 30px;
    align-self: flex-start;
    padding-right: 19px;
    gap: 35px;
}

.min-ico {
    width: 11px;
    height: 1px;
    background: #e8eaed;
}

.max-ico {
    width: 10px;
    height: 12px;
    border: 1px solid #e8eaed;
}

.x-ico {
    width: 12px;
    height: 12px;
    fill: none;
    stroke: #e8eaed;
}

.navbar {
    height: 38px;
    background: #35363a;
    display: flex;
    align-items: center;
    padding-left: 15px;
    flex: none;
}

.nav-ico {
    width: 16px;
    height: 16px;
    margin-right: 16px;
    fill: none;
    stroke: #e8eaed;
    stroke-width: 1.7;
    flex: none;
}

.nav-ico .grey {
    stroke: #75777b;
}

.nav-ico .solid {
    fill: #e8eaed;
    stroke: none;
}

.omnibox {
    width: 644px;
    height: 28px;
    margin-left: -4px;
    background: #202124;
    border-radius: 14px;
    display: flex;
    align-items: center;
    padding-left: 13px;
    font-size: 14px;
    flex: none;
}

.lock {
    width: 10px;
    height: 12px;
    flex: none;
}

.url {
    margin-left: 11px;
    width: 552px;
    color: #9aa0a6;
}

.url b {
    font-weight: 400;
    color: #e8eaed;
}

.omni-ico {
    width: 16px;
    height: 16px;
    margin-right: 16px;
    flex: none;
}

.puzzle {
    width: 16px;
    height: 16px;
    margin-left: 15px;
    flex: none;
}

.incog {
    width: 90px;
    height: 28px;
    margin-left: 11px;
    background: #202124;
    border-radius: 14px;
    display: flex;
    align-items: center;
    font-size: 13px;
    flex: none;
}

.incog-ava {
    width: 28px;
    height: 28px;
    background: #f1f3f4;
    border-radius: 50%;
    margin: 0 3px 0 1px;
    padding: 5px;
}

.incog-ava svg {
    display: block;
}

.kebab {
    display: flex;
    flex-direction: column;
    gap: 3px;
    margin-left: 20px;
}

.kebab i {
    width: 3px;
    height: 3px;
    border-radius: 50%;
    background: #e8eaed;
}

.meet {
    flex: 1;
    background: #111111;
    display: flex;
    flex-direction: column;
}

.meet-top {
    display: flex;
    height: 48px;
    flex: none;
}

.rec {
    margin: 6px 0 0 7px;
    width: 73px;
    height: 36px;
    border-radius: 3px;
    background: #b3261e;
    color: #fff;
    font-size: 15px;
    font-weight: 700;
    display: flex;
    align-items: center;
    justify-content: center;
    gap: 5px;
}

.rec i {
    width: 13px;
    height: 13px;
    background: #fff;
    border-radius: 50%;
}

.ava {
    border-radius: 50%;
    color: #fff;
    display: flex;
    align-items: center;
    justify-content: center;
    flex: none;
}

.ava-s {
    width: 36px;
    height: 36px;
    margin: 6px 0 0 23px;
    background: #78909c;
    font-size: 20px;
}

.presenting {
    margin-left: 15px;
    width: 265px;
    font-size: 18px;
    line-height: 48px;
    white-space: nowrap;
    color: #eee;
}

.presenter-box {
    width: 309px;
    height: 48px;
    background: #060606;
    border-radius: 8px 0 0 8px;
    display: flex;
    align-items: center;
    padding-left: 8px;
}

.ava-t {
    width: 32px;
    height: 32px;
    background: #00897b;
    font-size: 16px;
}

.who {
    margin-left: 8px;
    font-size: 14px;
    line-height: 19px;
    white-space: nowrap;
    color: #f1f1f1;
    letter-spacing: -.1px;
}

.meet-actions {
    width: 145px;
    height: 48px;
    background: #fff;
    border-radius: 0 0 0 8px;
    display: flex;
    align-items: center;
}

.people {
    margin-left: 27px;
    display: flex;
    align-items: flex-start;
    color: #5f6368;
    width: 46px;
}

.people svg {
    width: 24px;
    height: 24px;
    fill: none;
    stroke: #444;
    stroke-width: 1.8;
}

.people sup {
    font-size: 11px;
    margin: -3px 0 0 -3px;
    color: #5f6368;
}

.divider {
    width: 1px;
    height: 20px;
    background: #eee;
}

.chat {
    position: relative;
    margin-left: 23px;
    width: 24px;
    height: 24px;
}

.chat svg {
    width: 24px;
    height: 24px;
    fill: none;
    stroke: #333;
    stroke-width: 1.7;
}

.chat i {
    position: absolute;
    top: -4px;
    right: -2px;
    width: 9px;
    height: 9px;
    border-radius: 50%;
    background: #00897b;
}

.thumb {
    width: 88px;
    height: 48px;
    background: #808285;
    position: relative;
    overflow: hidden;
}

.thumb-c {
    position: absolute;
    top: 7px;
    border-radius: 50%;
    display: flex;
    align-items: center;
    justify-content: center;
}

.c2 {
    left: 31px;
    top: 11px;
    width: 26px;
    height: 26px;
    background: #8c4a6a;
    color: #b98ba0;
    font-size: 14px;
}

.c1 {
    left: 8px;
    width: 34px;
    height: 34px;
    background: #45474b;
}

.c1 svg {
    width: 18px;
    height: 18px;
}

.c3 {
    left: 47px;
    width: 34px;
    height: 34px;
    background: #57595c;
    display: grid;
    grid-template-columns: 8px 8px;
    grid-auto-rows: 8px;
    gap: 2px;
    align-content: center;
}

.c3 i {
    border: 2px solid #96989b;
}

.thumb-you {
    position: absolute;
    left: 4px;
    top: 35px;
    font-size: 12px;
    color: #fff;
}

.thumb-mic {
    position: absolute;
    right: 3px;
    bottom: 1px;
    width: 16px;
    height: 16px;
    border-radius: 50%;
    background: #d93025;
}

.meet-stage {
    flex: 1;
    display: flex;
    align-items: center;
    justify-content: center;
    padding: 41px 1px 0 0;
}

.big-t {
    width: 160px;
    height: 160px;
    border-radius: 50%;
    background: #c2185b;
    color: #fff;
    font-size: 88px;
    display: flex;
    align-items: center;
    justify-content: center;
}

.meet-bottom {
    height: 42px;
    flex: none;
    display: flex;
    align-items: flex-start;
    padding: 5px 0 0 14px;
}

.pin {
    width: 14px;
    height: 20px;
    margin-top: 6px;
}

.mic {
    width: 26px;
    height: 26px;
    margin-left: 13px;
    margin-top: 3px;
    border-radius: 50%;
    background: #d93025;
    padding: 5px;
}

.mic svg {
    display: block;
}

.you {
    margin-left: 8px;
    margin-top: 7px;
    font-size: 14px;
    font-weight: 500;
    color: #e8e8e8;
}

/* ---------- FluidSIM ---------- */

.fluid {
    width: 959px;
    background: #fff;
    display: flex;
    flex-direction: column;
    font-size: 12px;
}

.fs-title {
    height: 30px;
    display: flex;
    align-items: center;
    padding-left: 8px;
    color: #9a9a9a;
    flex: none;
}

.fs-logo {
    width: 16px;
    height: 17px;
    margin-right: 5px;
    flex: none;
}

.fs-btns {
    margin-left: auto;
    display: flex;
    align-items: center;
    gap: 34px;
    padding-right: 18px;
}

.fs-btns .min-ico {
    background: #888;
}

.fs-btns .max-ico {
    border-color: #888;
}

.fs-btns .x-ico {
    stroke: #888;
}

.fs-menu {
    height: 22px;
    display: flex;
    align-items: center;
    padding-left: 7px;
    color: #444;
    flex: none;
}

.fs-menu span {
    margin-right: 13.4px;
}

.fs-tools {
    height: 32px;
    background: #f0f0f0;
    border-top: 1px solid #bbb;
    display: flex;
    align-items: center;
    padding-left: 12px;
    flex: none;
}

.fs-tools::before {
    content: "";
    width: 1px;
    height: 26px;
    background: #aaa;
    margin: 0 7px 0 -8px;
    flex: none;
}

.ti {
    width: 24px;
    height: 24px;
    flex: none;
    padding: 1px;
}

.tsep {
    width: 1px;
    height: 22px;
    background: #888;
    margin: 0 4px 0 3px;
    flex: none;
}

.lens-t {
    font: 6px "Liberation Sans", sans-serif;
    text-anchor: middle;
}

.mdi {
    flex: 1;
    min-height: 0;
    background: linear-gradient(#b5c9dc, #c4d5e5 40px, #c0d2e3);
    display: flex;
    padding: 5px 3px 2px 5px;
}

.lib-win {
    width: 361px;
    display: flex;
    flex-direction: column;
}

.splitter {
    width: 1px;
    margin: 0 6px 0 6px;
    background: #aebfce;
}

.cir-win {
    flex: 1;
    min-width: 0;
    display: flex;
    flex-direction: column;
}

.cir-win .mdi-title span {
    letter-spacing: -.15px;
}

.mdi-title {
    height: 29px;
    display: flex;
    align-items: center;
    padding: 3px 0 0 5px;
    color: #8f9499;
    flex: none;
    font-size: 12px;
    background: linear-gradient(#cbdbe9, #dbe7f1);
}

.mdi-btns {
    margin-left: auto;
    display: flex;
    gap: 3px;
    padding-right: 2px;
}

.mdi-btn {
    width: 31px;
    height: 18px;
    border: 1px solid #8c99a8;
    border-radius: 2px;
    background: #cfdce8;
    display: flex;
    align-items: center;
    justify-content: center;
    font-size: 11px;
    color: #555;
}

.b-min {
    width: 11px;
    height: 5px;
    border: 1px solid #555;
    background: #fff;
}

.b-res {
    width: 9px;
    height: 9px;
    border: 1px solid #555;
    background: radial-gradient(#555 30%, #fff 35%);
}

.lib-body {
    flex: 1;
    min-height: 0;
    display: flex;
    padding-left: 5px;
    padding-right: 2px;
    background: #c8d8e7;
}

.lib-list {
    width: 337px;
    background: #fff;
    border-left: 1px solid #8a8a8a;
    overflow: hidden;
}

.head {
    height: 25px;
    background: #dce9f4;
    border-top: 1px solid #9a9a9a;
    border-bottom: 1px solid #9a9a9a;
    display: flex;
    align-items: center;
    font-size: 11px;
    color: #0c1430;
    letter-spacing: .42px;
}

.head-first {
    margin-top: -9px;
}

.head-empty {
    margin-bottom: 10px;
}

.tv {
    width: 1px;
    height: 21px;
    background: #888;
    margin-left: 12px;
    flex: none;
}

.tv2 {
    margin-left: 23px;
}

.th {
    width: 17px;
    height: 1px;
    background: #888;
    flex: none;
}

.tbox {
    width: 13px;
    height: 13px;
    background: #fff;
    border: 1px solid #777;
    flex: none;
    display: flex;
    align-items: center;
    justify-content: center;
}

.tbox::after {
    content: "";
    width: 9px;
    height: 1px;
    background: #000;
}

.head b {
    margin-left: 6px;
}

.tiles {
    display: flex;
    flex-wrap: wrap;
    width: 276px;
    gap: 4px;
    padding: 2px 0 11px 0;
}

.tile {
    width: 64px;
    height: 64px;
    border: 1px solid #888;
    background: #fff;
    text-align: center;
    font-size: 10px;
    color: #000;
    overflow: hidden;
}

.tile svg {
    display: block;
    width: 62px;
    height: 50px;
    margin-bottom: 1px;
    fill: none;
    stroke: #000;
    stroke-width: 1;
    shape-rendering: crispEdges;
}

.tile span {
    display: block;
    height: 12px;
    line-height: 12px;
    white-space: nowrap;
    overflow: hidden;
}

.tile-sel {
    background: #bcbcbc;
    border: 2px solid #333;
}

.tile-sel svg {
    margin: -1px 0 1px -1px;
}

.ic-t {
    font: 11px "Liberation Sans", sans-serif;
    fill: #000;
    stroke: none;
    text-anchor: middle;
}

.ic-c {
    font: 11px "Liberation Sans", sans-serif;
    fill: #000;
    stroke: none;
    text-anchor: middle;
}

.vscroll {
    width: 17px;
    background: #f0f0f0;
    display: flex;
    flex-direction: column;
    align-items: center;
    padding: 8px 0;
}

.arrow {
    width: 10px;
    height: 6px;
    fill: none;
    stroke: #606060;
    stroke-width: 1.500;
    flex: none;
}

.vthumb {
    width: 17px;
    height: 154px;
    background: #cdcdcd;
    margin-top: 504px;
}

.arrow-down {
    margin-top: auto;
}

.cir-pane {
    height: 882px;
    flex: none;
    background: #fff;
    border-left: 1px solid #5a2020;
    margin-left: 4px;
}

.circuit {
    display: block;
    width: 573px;
    height: 882px;
    fill: none;
    stroke: #000;
    stroke-width: 1;
}

.note {
    font: 12px "Liberation Sans", sans-serif;
    fill: #111;
    stroke: none;
    word-spacing: 3px;
    letter-spacing: .3px;
}

.lb {
    font: 11px "Liberation Sans", sans-serif;
    fill: #222;
    stroke: none;
}

.lb-b {
    fill: #13305c;
}

.lb-g {
    font-size: 12px;
    fill: #0b5f6b;
}

.lb-r {
    font-size: 12px;
    fill: #5a3320;
}

.lb-o {
    font-size: 12px;
    fill: #3a3320;
}

.hscroll {
    height: 16px;
    flex: none;
    margin-left: 4px;
    background: #f0f0f0;
    display: flex;
    align-items: center;
    padding-left: 6px;
}

.hscroll .arrow {
    width: 6px;
    height: 10px;
}

.hthumb {
    flex: 1;
    height: 16px;
    background: #cdcdcd;
    margin-left: 6px;
}

.fs-status {
    height: 20px;
    flex: none;
    background: #f0f0f0;
    border-top: 1px solid #a8a8a8;
    box-shadow: inset 0 1px 0 #fff;
    display: flex;
    align-items: center;
    padding-left: 2px;
    color: #111;
}

.grip {
    margin-left: auto;
    margin-right: 3px;
    width: 10px;
    height: 10px;
    background: radial-gradient(circle, #999 40%, transparent 45%) 0 0 / 3px 3px;
    clip-path: polygon(100% 0, 100% 100%, 0 100%);
}

/* ---------- taskbar ---------- */

.taskbar {
    height: 40px;
    display: flex;
    align-items: center;
    background: linear-gradient(90deg, #3e4143 0, #3f4243 600px, #343a40 640px, #1c2a2c 700px, #252b20 800px, #2a2c20 1300px, #222821 1700px, #20251f 1920px);
    border-top: 1px solid #4a4c4e;
    color: #fff;
    font-family: "Noto Sans", "Liberation Sans", sans-serif;
}

.tb-win {
    width: 16px;
    height: 16px;
    margin-left: 16px;
    flex: none;
}

.tb-search {
    width: 18px;
    height: 18px;
    margin-left: 31px;
    flex: none;
}

.tb-cortana {
    width: 15px;
    height: 15px;
    border: 2px solid #fff;
    border-radius: 50%;
    margin-left: 31px;
    flex: none;
}

.tb-app {
    width: 49px;
    height: 39px;
    display: flex;
    align-items: center;
    justify-content: center;
    flex: none;
    position: relative;
}

.tb-app:nth-of-type(2) {
    margin-left: 20px;
}

.tb-app svg {
    width: 24px;
    height: 24px;
}

.tb-open::after {
    content: "";
    position: absolute;
    left: 5px;
    right: 5px;
    bottom: 0;
    height: 2px;
    background: #76b9ed;
}

.tb-active {
    background: #666a6c;
}

.tb-active::after {
    left: 0;
    right: 0;
}

.tb-app .tb-festo {
    width: 28px;
    height: 26px;
    overflow: visible;
}

.festo-big {
    font: bold 8px "Liberation Sans", sans-serif;
    fill: #1e90ff;
    text-anchor: middle;
}

.festo-small {
    font: 5px "Liberation Sans", sans-serif;
    fill: #111;
    text-anchor: middle;
}

.tray {
    margin-left: auto;
    display: flex;
    align-items: center;
    height: 100%;
    padding-right: 25px;
}

.tray-up {
    width: 13px;
    height: 8px;
    fill: none;
    stroke: #fff;
    stroke-width: 1.100;
}

.tray-bat {
    width: 16px;
    height: 10px;
    margin-left: 10px;
}

.tray-wifi {
    width: 12px;
    height: 12px;
    margin-left: 11px;
}

.tray-lang {
    margin-left: 11px;
    width: 23px;
    font-size: 12px;
}

.tray-clock {
    margin-left: 13px;
    width: 58px;
    display: flex;
    flex-direction: column;
    align-items: center;
    font-size: 11.500px;
    line-height: 18px;
    white-space: nowrap;
}

.tray-note {
    width: 16px;
    height: 16px;
    margin-left: 18px;
    fill: none;
    stroke: #fff;
}
```
